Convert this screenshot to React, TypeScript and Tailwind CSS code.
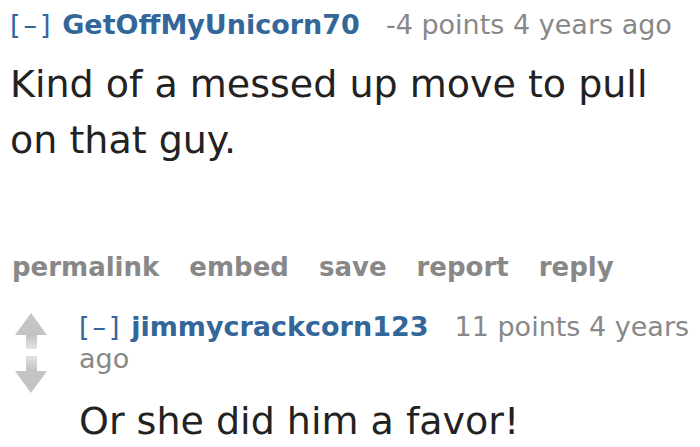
import React from "react";

function VoteArrows() {
  return (
    <svg width="36" height="84" viewBox="0 0 36 84" className="shrink-0">
      <defs>
        <linearGradient id="upFade" x1="0" y1="0" x2="0" y2="1">
          <stop offset="0" stopColor="#c2c2c2" />
          <stop offset="1" stopColor="#e4e4e4" />
        </linearGradient>
        <linearGradient id="downFade" x1="0" y1="0" x2="0" y2="1">
          <stop offset="0" stopColor="#e4e4e4" />
          <stop offset="1" stopColor="#c2c2c2" />
        </linearGradient>
      </defs>
      {/* up */}
      <polygon points="18,1 34,23 2,23" fill="#c4c4c4" />
      <rect x="13" y="23" width="11" height="14" fill="url(#upFade)" />
      {/* down */}
      <rect x="13" y="44" width="11" height="15" fill="url(#downFade)" />
      <polygon points="2,59 34,59 18,81" fill="#c4c4c4" />
    </svg>
  );
}

function Tagline({
  user,
  points,
  time,
}: {
  user: string;
  points: string;
  time: string;
}) {
  const words = (points + " " + time).split(" ");
  return (
    <p className="text-[27px] leading-[32px] text-[#888]">
      <span className="text-[#369] tracking-[3px]">[–]</span>{" "}
      <span className="font-bold text-[#369] mr-[26px]">{user}</span>
      {words.map((w, i) => (
        <React.Fragment key={i}>
          {i > 0 && " "}
          <span>{w}</span>
        </React.Fragment>
      ))}
    </p>
  );
}

export default function App() {
  return (
    <div
      className="w-[700px] h-[447px] overflow-hidden bg-white"
      style={{ fontFamily: '"DejaVu Sans", Verdana, sans-serif' }}
    >
      {/* first comment */}
      <div className="pl-[10px] pt-[9px]">
        <Tagline user="GetOffMyUnicorn70" points="-4 points" time="4 years ago" />
        <div className="mt-[15px] text-[38px] leading-[56px] text-[#222]">
          Kind of a messed up move to pull on that guy.
        </div>
        <ul className="mt-[84px] pl-[2px] flex gap-[30px] text-[26px] font-bold text-[#888] leading-[30px]">
          <li>permalink</li>
          <li>embed</li>
          <li>save</li>
          <li>report</li>
          <li>reply</li>
        </ul>
      </div>

      {/* child comment */}
      <div className="mt-[30px] flex pl-[13px]">
        <VoteArrows />
        <div className="ml-[30px] -mt-[1px]">
          <Tagline user="jimmycrackcorn123" points="11 points" time="4 years ago" />
          <div className="mt-[24px] text-[38px] leading-[44px] text-[#222]">
            Or she did him a favor!
          </div>
        </div>
      </div>
    </div>
  );
}
